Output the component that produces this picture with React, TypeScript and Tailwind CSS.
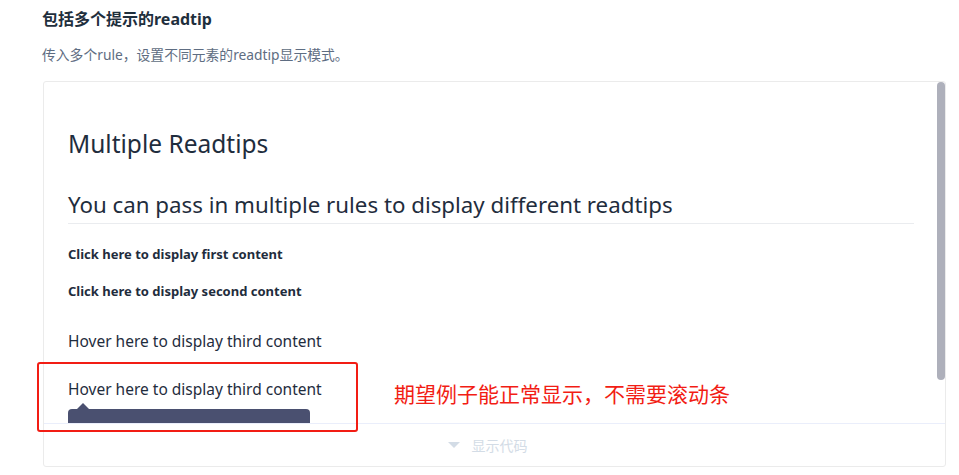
import React from "react";

export default function App() {
  return (
    <div
      className="relative w-[959px] h-[475px] bg-white overflow-hidden text-[#1f2d3d] font-['Noto_Sans','Noto_Sans_CJK_SC',sans-serif]"
    >
      <div className="pl-[42px] pt-[8px]">
        <h3 className="text-[16px] leading-[22px] font-bold text-[#1f2f3d]">包括多个提示的readtip</h3>
        <p className="mt-[14px] text-[13.8px] leading-[22px] text-[#5e6d82]">
          传入多个rule，设置不同元素的readtip显示模式。
        </p>
      </div>

      <div className="ml-[43px] mt-[15px] w-[903px] border border-[#ebebeb] rounded-[3px]">
        <div className="relative h-[341px] overflow-hidden pl-[24px] pr-[31px]">
          <h1 className="mt-[46px] h-[32px] text-[24.5px] leading-[32px] font-normal">Multiple Readtips</h1>
          <h2 className="mt-[30px] text-[22.3px] leading-[30px] pb-[3px] border-b border-[#eaecef] font-normal">
            You can pass in multiple rules to display different readtips
          </h2>
          <p className="mt-[20px] text-[13px] leading-[20px] font-bold">Click here to display first content</p>
          <p className="mt-[17px] text-[13px] leading-[20px] font-bold">Click here to display second content</p>
          <p className="mt-[29px] text-[15.5px] leading-[22px]">Hover here to display third content</p>
          <p className="mt-[26px] text-[15.5px] leading-[22px]">Hover here to display third content</p>
          <div className="relative mt-[9px] w-[242px] h-[40px] bg-[#4a5070] rounded-[4px]">
            <div className="absolute -top-[6px] left-[9px] w-0 h-0 border-l-[6px] border-r-[6px] border-b-[6px] border-l-transparent border-r-transparent border-b-[#4a5070]" />
          </div>
          <div className="absolute right-0 top-0 w-[8px] h-[298px] rounded-full bg-[#aeb0bb]" />
        </div>
        <div className="h-[43px] border-t border-[#eaeefb] flex items-center justify-center gap-[12px] pr-[14px] text-[#d3dce6] text-[14px]">
          <svg width="12" height="8" viewBox="0 0 12 8">
            <path d="M0 1 L12 1 L6 7 Z" fill="#d3dce6" />
          </svg>
          <span>显示代码</span>
        </div>
      </div>

      <div className="absolute left-[37px] top-[362px] w-[321px] h-[70px] border-[2px] border-[#f21d14] rounded-[3px]" />
      <div className="absolute left-[394px] top-[380px] text-[21px] leading-[28px] text-[#f21d14]">
        期望例子能正常显示，不需要滚动条
      </div>
    </div>
  );
}
